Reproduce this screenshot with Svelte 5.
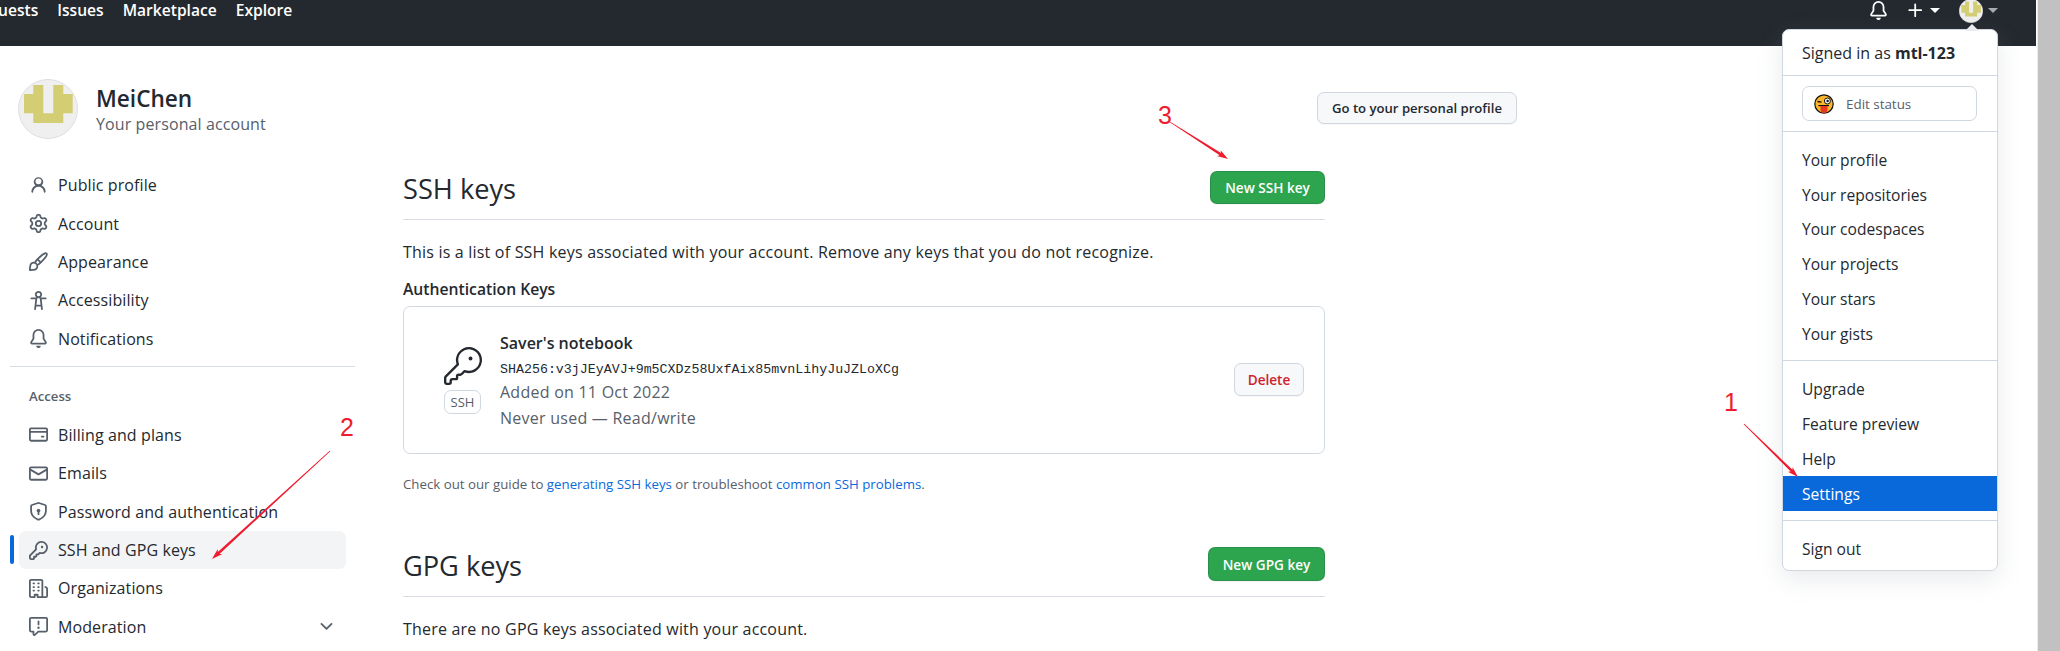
<script lang="ts">
  const icons: Record<string, string> = {
    person: 'M10.561 8.073a6.005 6.005 0 0 1 3.432 5.142.75.75 0 1 1-1.498.07 4.5 4.5 0 0 0-8.99 0 .75.75 0 1 1-1.498-.07 6.004 6.004 0 0 1 3.431-5.142 3.999 3.999 0 1 1 5.123 0ZM10.5 4.5a2.5 2.5 0 1 0-5 0 2.5 2.5 0 0 0 5 0Z',
    gear: 'M8 0a8.2 8.2 0 0 1 .701.031C9.444.095 9.99.645 10.16 1.29l.288 1.107c.018.066.079.158.212.224.231.114.454.243.668.386.123.082.233.09.299.071l1.103-.303c.644-.176 1.392.021 1.82.63.27.385.506.792.704 1.218.315.675.111 1.422-.364 1.891l-.814.806c-.049.048-.098.147-.088.294.016.257.016.515 0 .772-.01.147.038.246.088.294l.814.806c.475.469.679 1.216.364 1.891a7.977 7.977 0 0 1-.704 1.217c-.428.61-1.176.807-1.82.63l-1.102-.302c-.067-.019-.177-.011-.3.071a5.909 5.909 0 0 1-.668.386c-.133.066-.194.158-.211.224l-.29 1.106c-.168.646-.715 1.196-1.458 1.26a8.006 8.006 0 0 1-1.402 0c-.743-.064-1.289-.614-1.458-1.26l-.289-1.106c-.018-.066-.079-.158-.212-.224a5.738 5.738 0 0 1-.668-.386c-.123-.082-.233-.09-.299-.071l-1.103.303c-.644.176-1.392-.021-1.82-.63a8.12 8.12 0 0 1-.704-1.218c-.315-.675-.111-1.422.363-1.891l.815-.806c.05-.048.098-.147.088-.294a6.214 6.214 0 0 1 0-.772c.01-.147-.038-.246-.088-.294l-.815-.806C.635 6.045.431 5.298.746 4.623a7.92 7.92 0 0 1 .704-1.217c.428-.61 1.176-.807 1.82-.63l1.102.302c.067.019.177.011.3-.071.214-.143.437-.272.668-.386.133-.066.194-.158.211-.224l.29-1.106C6.009.645 6.556.095 7.299.03 7.53.01 7.764 0 8 0Zm-.571 1.525c-.036.003-.108.036-.137.146l-.289 1.105c-.147.561-.549.967-.998 1.189-.173.086-.34.183-.5.29-.417.278-.97.423-1.529.27l-1.103-.303c-.109-.03-.175.016-.195.045-.22.312-.412.644-.573.99-.014.031-.021.11.059.19l.815.806c.411.406.562.957.53 1.456a4.709 4.709 0 0 0 0 .582c.032.499-.119 1.05-.53 1.456l-.815.806c-.081.08-.073.159-.059.19.162.346.353.677.573.989.02.03.085.076.195.046l1.102-.303c.56-.153 1.113-.008 1.53.27.161.107.328.204.501.29.447.222.85.629.997 1.189l.289 1.105c.029.109.101.143.137.146a6.6 6.6 0 0 0 1.142 0c.036-.003.108-.036.137-.146l.289-1.105c.147-.561.549-.967.998-1.189.173-.086.34-.183.5-.29.417-.278.97-.423 1.529-.27l1.103.303c.109.029.175-.016.195-.045.22-.313.411-.644.573-.99.014-.031.021-.11-.059-.19l-.815-.806c-.411-.406-.562-.957-.53-1.456a4.709 4.709 0 0 0 0-.582c-.032-.499.119-1.05.53-1.456l.815-.806c.081-.08.073-.159.059-.19a6.464 6.464 0 0 0-.573-.989c-.02-.03-.085-.076-.195-.046l-1.102.303c-.56.153-1.113.008-1.53-.27a4.44 4.44 0 0 0-.501-.29c-.447-.222-.85-.629-.997-1.189l-.289-1.105c-.029-.11-.101-.143-.137-.146a6.6 6.6 0 0 0-1.142 0ZM11 8a3 3 0 1 1-6 0 3 3 0 0 1 6 0ZM9.5 8a1.5 1.5 0 1 0-3.001.001A1.5 1.5 0 0 0 9.5 8Z',
    paintbrush: 'M11.134 1.535c.7-.509 1.416-.942 2.076-1.155.649-.21 1.463-.267 2.069.34.603.601.568 1.411.368 2.07-.202.668-.624 1.39-1.125 2.096-1.011 1.424-2.496 2.987-3.775 4.249-1.098 1.084-2.132 1.839-3.04 2.3a3.744 3.744 0 0 1-1.055 3.217c-.431.431-1.065.691-1.657.861-.614.177-1.294.287-1.914.357A21.151 21.151 0 0 1 .797 16H.743l.007-.75H.749L.742 16a.75.75 0 0 1-.743-.742l.743-.008-.742.007v-.054a21.25 21.25 0 0 1 .13-2.284c.067-.647.187-1.287.358-1.914.17-.591.43-1.226.86-1.657a3.746 3.746 0 0 1 3.227-1.054c.466-.893 1.225-1.907 2.314-2.982 1.271-1.255 2.833-2.75 4.245-3.777ZM1.62 13.089c-.051.464-.086.929-.104 1.395.466-.018.932-.053 1.396-.104a10.511 10.511 0 0 0 1.668-.309c.526-.151.856-.325 1.011-.48a2.25 2.25 0 1 0-3.182-3.182c-.155.155-.329.485-.48 1.01a10.515 10.515 0 0 0-.309 1.67Zm10.396-10.34c-1.224.89-2.605 2.189-3.822 3.384l1.718 1.718c1.21-1.205 2.51-2.597 3.387-3.833.47-.662.78-1.227.912-1.662.134-.444.032-.551.009-.575h-.001V1.78c-.014-.014-.113-.113-.548.027-.432.14-.995.462-1.655.94Zm-4.832 7.266-.001.001a9.859 9.859 0 0 0 1.63-1.142L7.155 7.216a9.7 9.7 0 0 0-1.161 1.607c.482.302.889.71 1.19 1.192Z',
    accessibility: 'M9.923 5.302c.063.063.122.129.178.198H14A.75.75 0 0 1 14 7h-3.3l.578 5.163.362 2.997a.75.75 0 0 1-1.49.18L9.868 13H6.132l-.282 2.34a.75.75 0 0 1-1.49-.18l.362-2.997L5.3 7H2a.75.75 0 0 1 0-1.5h3.9a2.54 2.54 0 0 1 .176-.198 3 3 0 1 1 3.847 0ZM9.2 7.073h-.001a1.206 1.206 0 0 0-2.398 0L6.305 11.5h3.39ZM9.5 3a1.5 1.5 0 1 0-3.001.001A1.5 1.5 0 0 0 9.5 3Z',
    bell: 'M8 16c.9 0 1.7-.6 1.9-1.5.1-.3-.1-.5-.4-.5h-3c-.3 0-.5.2-.4.5.2.9 1 1.5 1.9 1.5ZM3 5a5 5 0 0 1 10 0v2.947c0 .05.015.098.042.139l1.703 2.555A1.519 1.519 0 0 1 13.482 13H2.518a1.516 1.516 0 0 1-1.263-2.36l1.703-2.554A.255.255 0 0 0 3 7.947Zm5-3.5A3.5 3.5 0 0 0 4.5 5v2.947c0 .346-.102.683-.294.97l-1.703 2.556a.017.017 0 0 0-.003.01l.001.006c0 .002.002.004.004.006l.006.004.007.001h10.964l.007-.001.006-.004.004-.006.001-.007a.017.017 0 0 0-.003-.01l-1.703-2.554a1.745 1.745 0 0 1-.294-.97V5A3.5 3.5 0 0 0 8 1.5Z',
    card: 'M10.75 9a.75.75 0 0 0 0 1.5h1.5a.75.75 0 0 0 0-1.5h-1.5ZM0 3.75C0 2.784.784 2 1.75 2h12.5c.966 0 1.75.784 1.75 1.75v8.5A1.75 1.75 0 0 1 14.25 14H1.75A1.75 1.75 0 0 1 0 12.25ZM14.5 6.5h-13v5.75c0 .138.112.25.25.25h12.5a.25.25 0 0 0 .25-.25Zm0-2.75a.25.25 0 0 0-.25-.25H1.75a.25.25 0 0 0-.25.25V5h13Z',
    mail: 'M1.75 2h12.5c.966 0 1.75.784 1.75 1.75v8.5A1.75 1.75 0 0 1 14.25 14H1.75A1.75 1.75 0 0 1 0 12.25v-8.5C0 2.784.784 2 1.75 2ZM1.5 12.251c0 .138.112.25.25.25h12.5a.25.25 0 0 0 .25-.25V5.809L8.38 9.397a.75.75 0 0 1-.76 0L1.5 5.809v6.442Zm13-8.181v-.32a.25.25 0 0 0-.25-.25H1.75a.25.25 0 0 0-.25.25v.32L8 7.88Z',
    shield: 'M7.467.133a1.748 1.748 0 0 1 1.066 0l5.25 1.68A1.75 1.75 0 0 1 15 3.48V7c0 1.566-.32 3.182-1.303 4.682-.983 1.498-2.585 2.813-5.032 3.855a1.697 1.697 0 0 1-1.33 0c-2.447-1.042-4.049-2.357-5.032-3.855C1.32 10.182 1 8.566 1 7V3.48a1.75 1.75 0 0 1 1.217-1.667Zm.61 1.429a.25.25 0 0 0-.153 0l-5.25 1.68a.25.25 0 0 0-.174.238V7c0 1.358.275 2.666 1.057 3.86.784 1.194 2.121 2.34 4.366 3.297a.196.196 0 0 0 .154 0c2.245-.956 3.582-2.104 4.366-3.298C13.225 9.666 13.5 8.36 13.5 7V3.48a.251.251 0 0 0-.174-.237l-5.25-1.68ZM8.75 8.582v1.668a.75.75 0 0 1-1.5 0V8.582a1.5 1.5 0 1 1 1.5 0Z',
    key: 'M10.5 0a5.499 5.499 0 1 1-1.288 10.848l-.932.932a.75.75 0 0 1-.53.22H7v.75a.75.75 0 0 1-.22.53l-.5.5a.75.75 0 0 1-.53.22H5v.75a.75.75 0 0 1-.22.53l-.5.5a.75.75 0 0 1-.53.22h-2A1.75 1.75 0 0 1 0 14.25v-2c0-.199.079-.389.22-.53l4.932-4.932A5.5 5.5 0 0 1 10.5 0Zm-4 5.5c-.001.431.069.86.205 1.269a.75.75 0 0 1-.181.768L1.5 12.56v1.69c0 .138.112.25.25.25h1.69l.06-.06v-1.19a.75.75 0 0 1 .75-.75h1.19l.06-.06v-1.19a.75.75 0 0 1 .75-.75h1.19l1.023-1.025a.75.75 0 0 1 .768-.18A4 4 0 1 0 6.5 5.5ZM11 6a1 1 0 1 1 0-2 1 1 0 0 1 0 2Z',
    org: 'M1.75 16A1.75 1.75 0 0 1 0 14.25V1.75C0 .784.784 0 1.75 0h8.5C11.216 0 12 .784 12 1.75v12.5c0 .085-.006.168-.018.25h2.268a.25.25 0 0 0 .25-.25V8.285a.25.25 0 0 0-.111-.208l-1.055-.703a.749.749 0 1 1 .832-1.248l1.055.703c.487.325.779.871.779 1.456v5.965A1.75 1.75 0 0 1 14.25 16h-3.5a.766.766 0 0 1-.197-.026c-.099.017-.2.026-.303.026h-3a.75.75 0 0 1-.75-.75V14h-1v1.25a.75.75 0 0 1-.75.75Zm-.25-1.75c0 .138.112.25.25.25H4v-1.25a.75.75 0 0 1 .75-.75h2.5a.75.75 0 0 1 .75.75v1.25h2.25a.25.25 0 0 0 .25-.25V1.75a.25.25 0 0 0-.25-.25h-8.5a.25.25 0 0 0-.25.25ZM3.75 6h.5a.75.75 0 0 1 0 1.5h-.5a.75.75 0 0 1 0-1.5ZM3 3.75A.75.75 0 0 1 3.75 3h.5a.75.75 0 0 1 0 1.5h-.5A.75.75 0 0 1 3 3.75Zm4 3A.75.75 0 0 1 7.75 6h.5a.75.75 0 0 1 0 1.5h-.5A.75.75 0 0 1 7 6.75ZM7.75 3h.5a.75.75 0 0 1 0 1.5h-.5a.75.75 0 0 1 0-1.5ZM3 9.75A.75.75 0 0 1 3.75 9h.5a.75.75 0 0 1 0 1.5h-.5A.75.75 0 0 1 3 9.75ZM7.75 9h.5a.75.75 0 0 1 0 1.5h-.5a.75.75 0 0 1 0-1.5Z',
    report: 'M0 1.75C0 .784.784 0 1.75 0h12.5C15.216 0 16 .784 16 1.75v9.5A1.75 1.75 0 0 1 14.25 13H8.06l-2.573 2.573A1.458 1.458 0 0 1 3 14.543V13H1.75A1.75 1.75 0 0 1 0 11.25Zm1.75-.25a.25.25 0 0 0-.25.25v9.5c0 .138.112.25.25.25h2a.75.75 0 0 1 .75.75v2.19l2.72-2.72a.749.749 0 0 1 .53-.22h6.5a.25.25 0 0 0 .25-.25v-9.5a.25.25 0 0 0-.25-.25Zm7 2.25v2.5a.75.75 0 0 1-1.5 0v-2.5a.75.75 0 0 1 1.5 0ZM9 9a1 1 0 1 1-2 0 1 1 0 0 1 2 0Z',
    chevron: 'M12.78 5.22a.749.749 0 0 1 0 1.06l-4.25 4.25a.749.749 0 0 1-1.06 0L3.22 6.28a.749.749 0 1 1 1.06-1.06L8 8.939l3.72-3.719a.749.749 0 0 1 1.06 0Z',
    plus: 'M7.75 2a.75.75 0 0 1 .75.75V7h4.25a.75.75 0 0 1 0 1.5H8.5v4.25a.75.75 0 0 1-1.5 0V8.5H2.75a.75.75 0 0 1 0-1.5H7V2.75A.75.75 0 0 1 7.75 2Z'
  };

  const key24 =
    'M16.75 8.5a1.25 1.25 0 1 0 0-2.5 1.25 1.25 0 0 0 0 2.5ZM15.75 0a8.25 8.25 0 0 0-7.851 10.79L.513 18.178A1.75 1.75 0 0 0 0 19.414v2.836C0 23.217.784 24 1.75 24h1.5A1.75 1.75 0 0 0 5 22.25v-1a.25.25 0 0 1 .25-.25h2.735a.75.75 0 0 0 .545-.22l.214-.213A.875.875 0 0 0 9 19.948V18.5a.25.25 0 0 1 .25-.25h1.086c.464 0 .91-.184 1.237-.513l1.636-1.636A8.25 8.25 0 1 0 15.75 0ZM9 8.25a6.75 6.75 0 1 1 4.288 6.287.75.75 0 0 0-.802.168l-1.976 1.975a.25.25 0 0 1-.177.073H9.25A1.75 1.75 0 0 0 7.5 18.5v1H5.25a1.75 1.75 0 0 0-1.75 1.75v1a.25.25 0 0 1-.25.25h-1.5a.25.25 0 0 1-.25-.25v-2.836a.25.25 0 0 1 .073-.177l7.722-7.721a.75.75 0 0 0 .18-.768A6.73 6.73 0 0 1 9 8.25Z';

  const topLinks = [
    { label: 'Public profile', icon: 'person' },
    { label: 'Account', icon: 'gear' },
    { label: 'Appearance', icon: 'paintbrush' },
    { label: 'Accessibility', icon: 'accessibility' },
    { label: 'Notifications', icon: 'bell' }
  ];

  const accessLinks = [
    { label: 'Billing and plans', icon: 'card' },
    { label: 'Emails', icon: 'mail' },
    { label: 'Password and authentication', icon: 'shield' },
    { label: 'SSH and GPG keys', icon: 'key', current: true },
    { label: 'Organizations', icon: 'org' },
    { label: 'Moderation', icon: 'report', more: true }
  ];

  const profileLinks = ['Your profile', 'Your repositories', 'Your codespaces', 'Your projects', 'Your stars', 'Your gists'];
  const helpLinks = ['Upgrade', 'Feature preview', 'Help'];

  // tail to tip, in page pixels
  const arrows = [
    { x1: 1744, y1: 424, x2: 1798, y2: 477 },
    { x1: 330, y1: 451, x2: 212, y2: 559 },
    { x1: 1170, y1: 122, x2: 1228, y2: 159 }
  ];

  function arrowPoints(a: { x1: number; y1: number; x2: number; y2: number }) {
    const dx = a.x2 - a.x1;
    const dy = a.y2 - a.y1;
    const len = Math.hypot(dx, dy);
    const ux = dx / len;
    const uy = dy / len;
    const at = (along: number, side: number) =>
      `${(a.x2 - ux * along - uy * side).toFixed(1)},${(a.y2 - uy * along + ux * side).toFixed(1)}`;
    return [
      at(len, 0.4),
      at(9, 1.3),
      at(11, 3.4),
      `${a.x2},${a.y2}`,
      at(11, -3.4),
      at(9, -1.3),
      at(len, -0.4)
    ].join(' ');
  }
</script>

{#snippet icon(name: string, cls = 'ico')}
  <svg class={cls} viewBox="0 0 16 16" aria-hidden="true"><path fill-rule="evenodd" d={icons[name]} /></svg>
{/snippet}

{#snippet identicon(cls: string)}
  <svg class={cls} viewBox="0 0 60 60" aria-hidden="true">
    <circle cx="30" cy="30" r="29.5" fill="#efefef" stroke="#dfdfdf" />
    <path fill="#d3cd74" d="M15.3 6h10v28.3h10V6h10v9h9.4v19.3h-9.4V44h-30v-9.7H6V15h9.3Z" />
  </svg>
{/snippet}

{#snippet navLink(link: { label: string; icon: string; current?: boolean; more?: boolean })}
  <a class="side-link" class:current={link.current} href="#top">
    {@render icon(link.icon)}
    <span>{link.label}</span>
    {#if link.more}{@render icon('chevron', 'chev')}{/if}
  </a>
{/snippet}

<div class="page" id="top">
  <div class="content">
    <header class="topbar">
      <nav class="topnav">
        <a href="#top">uests</a>
        <a href="#top">Issues</a>
        <a href="#top">Marketplace</a>
        <a href="#top">Explore</a>
      </nav>
      <div class="tools">
        {@render icon('bell', 'bell')}
        {@render icon('plus', 'plus')}
        <span class="caret"></span>
        {@render identicon('mini')}
        <span class="caret dim"></span>
      </div>
    </header>

    <div class="wrap">
      <div class="page-head">
        <div class="who">
          {@render identicon('big')}
          <div class="who-text">
            <div class="name">MeiChen</div>
            <div class="acct">Your personal account</div>
          </div>
        </div>
        <button class="btn profile-btn">Go to your personal profile</button>
      </div>

      <div class="columns">
        <aside class="sidebar">
          {#each topLinks as link}
            {@render navLink(link)}
          {/each}
          <hr class="side-rule" />
          <div class="side-title">Access</div>
          {#each accessLinks as link}
            {@render navLink(link)}
          {/each}
        </aside>

        <main class="main">
          <div class="sub-head">
            <h2>SSH keys</h2>
            <button class="btn green">New SSH key</button>
          </div>
          <p class="lead">This is a list of SSH keys associated with your account. Remove any keys that you do not recognize.</p>
          <h3>Authentication Keys</h3>
          <div class="key-card">
            <div class="key-side">
              <svg class="key-ico" viewBox="0 0 24 24" aria-hidden="true"><path fill-rule="evenodd" d={key24} /></svg>
              <span class="badge">SSH</span>
            </div>
            <div class="key-info">
              <div class="key-name">Saver's notebook</div>
              <code>SHA256:v3jJEyAVJ+9m5CXDz58UxfAix85mvnLihyJuJZLoXCg</code>
              <div class="key-meta first">Added on 11 Oct 2022</div>
              <div class="key-meta">Never used — Read/write</div>
            </div>
            <button class="btn danger">Delete</button>
          </div>
          <p class="note">Check out our guide to <a href="#top">generating SSH keys</a> or troubleshoot <a href="#top">common SSH problems</a>.</p>

          <div class="sub-head gpg">
            <h2>GPG keys</h2>
            <button class="btn green wide">New GPG key</button>
          </div>
          <p class="lead">There are no GPG keys associated with your account.</p>
        </main>
      </div>
    </div>

    <div class="menu">
      <div class="signed">Signed in as <strong>mtl-123</strong></div>
      <div class="status-row">
        <button class="status">
          <svg class="emoji" viewBox="0 0 20 20" aria-hidden="true">
            <circle cx="10" cy="10" r="9.2" fill="#fbb62b" stroke="#111" stroke-width="1.2" />
            <path d="M3.5 7.5l4 .6" stroke="#111" stroke-width="1.3" fill="none" />
            <circle cx="13.4" cy="7" r="3" fill="#fff" stroke="#111" stroke-width="1" />
            <circle cx="13.6" cy="7" r="1.2" fill="#111" />
            <path d="M4.5 11.6h10.5" stroke="#111" stroke-width="1.2" />
            <path d="M6.5 12h7v3.6a3.3 3.3 0 0 1-7 0Z" fill="#e8391f" />
          </svg>
          <span>Edit status</span>
        </button>
      </div>
      <div class="group">
        {#each profileLinks as item}
          <a class="item" href="#top">{item}</a>
        {/each}
      </div>
      <div class="group">
        {#each helpLinks as item}
          <a class="item" href="#top">{item}</a>
        {/each}
        <a class="item active" href="#top">Settings</a>
      </div>
      <div class="group last">
        <a class="item" href="#top">Sign out</a>
      </div>
    </div>
  </div>
  <div class="gutter"></div>

  <!-- red annotations drawn over the screenshot -->
  <svg class="marks" viewBox="0 0 2060 651" aria-hidden="true">
    {#each arrows as a}
      <polygon points={arrowPoints(a)} fill="#ee1c2e" />
    {/each}
    <text x="1724" y="411">1</text>
    <text x="340" y="436">2</text>
    <text x="1158" y="124">3</text>
  </svg>
</div>

<style>
  :global(body) {
    margin: 0;
    background: #fff;
  }

  .page {
    position: relative;
    display: flex;
    width: 2060px;
    height: 651px;
    overflow: hidden;
    font-family: "Open Sans", "Noto Sans", sans-serif;
    font-size: 16px;
    line-height: 24px;
    color: #24292f;
  }

  .content {
    position: relative;
    width: 2036px;
    flex: none;
  }

  .gutter {
    width: 22px;
    margin-left: 1px;
    border-left: 1px solid #ececec;
    flex: none;
    background: #c1c1c1;
  }

  a {
    text-decoration: none;
    color: inherit;
  }

  .topbar {
    display: flex;
    justify-content: space-between;
    height: 46px;
    padding-right: 38px;
    box-sizing: border-box;
    background: #24292f;
    overflow: hidden;
  }

  .topnav {
    display: flex;
    gap: 19px;
    height: 20px;
    margin-left: -2px;
    align-items: center;
    font-size: 15.6px;
    font-weight: 600;
    color: #fff;
  }

  .tools {
    display: flex;
    align-items: center;
    height: 21px;
  }

  .bell {
    width: 19px;
    height: 19px;
    fill: #fff;
  }

  .plus {
    width: 19px;
    height: 19px;
    margin-left: 18px;
    fill: #fff;
  }

  .caret {
    width: 0;
    height: 0;
    margin-left: 5px;
    border: 5px solid transparent;
    border-top-color: #fff;
    border-bottom: 0;
  }

  .caret.dim {
    border-top-color: #a8abae;
  }

  .mini {
    width: 24px;
    height: 24px;
    margin-left: 19px;
    flex: none;
  }

  .wrap {
    width: 1507px;
    padding: 33px 0 0 10px;
  }

  .page-head {
    display: flex;
    justify-content: space-between;
    align-items: flex-start;
    height: 87px;
    padding-left: 8px;
  }

  .who {
    display: flex;
    align-items: center;
    gap: 18px;
  }

  .who-text {
    padding-top: 2px;
  }

  .big {
    width: 60px;
    height: 60px;
    flex: none;
  }

  .name {
    font-size: 22.6px;
    font-weight: 600;
    line-height: 27px;
  }

  .acct {
    color: #57606a;
    letter-spacing: 0.1px;
  }

  .btn {
    display: inline-flex;
    align-items: center;
    justify-content: center;
    height: 33px;
    box-sizing: border-box;
    padding: 0;
    border: 1px solid #d0d7de;
    border-radius: 7px;
    background: #f6f8fa;
    box-shadow: 0 1px 0 rgba(27, 31, 36, 0.04);
    font-family: inherit;
    font-size: 13.6px;
    font-weight: 600;
    color: #24292f;
  }

  .profile-btn {
    width: 200px;
    height: 32px;
    margin-top: 13px;
    font-size: 13.1px;
  }

  .green {
    width: 115px;
    background: #2da44e;
    border-color: rgba(27, 31, 36, 0.15);
    color: #fff;
  }

  .green.wide {
    width: 117px;
    height: 34px;
  }

  .danger {
    flex: none;
    width: 70px;
    margin-bottom: 2px;
    color: #cf222e;
  }

  .columns {
    display: flex;
    gap: 48px;
    align-items: flex-start;
  }

  .sidebar {
    width: 345px;
    flex: none;
  }

  .side-link {
    position: relative;
    display: flex;
    align-items: center;
    height: 38.4px;
    margin: 0 9px;
    padding-left: 10px;
    border-radius: 7px;
    letter-spacing: 0.1px;
  }

  .side-link.current {
    background: #f3f4f6;
  }

  .side-link.current::before {
    content: '';
    position: absolute;
    left: -9px;
    top: 4px;
    bottom: 5px;
    width: 4px;
    border-radius: 4px;
    background: #0969da;
  }

  .ico {
    width: 19px;
    height: 19px;
    margin-right: 10px;
    flex: none;
    fill: #57606a;
  }

  .chev {
    width: 19px;
    height: 19px;
    margin-left: auto;
    margin-right: 10px;
    fill: #57606a;
  }

  .side-rule {
    height: 1px;
    margin: 7.7px 0 0;
    border: 0;
    background: #d8dee4;
  }

  .side-title {
    height: 49px;
    padding: 17px 0 0 19px;
    box-sizing: border-box;
    font-size: 13.2px;
    font-weight: 600;
    color: #57606a;
  }

  .main {
    width: 922px;
    flex: none;
  }

  .sub-head {
    display: flex;
    justify-content: space-between;
    align-items: center;
    padding: 5px 0 15px;
    border-bottom: 1px solid #d8dee4;
  }

  .sub-head.gpg {
    margin-top: 46px;
  }

  h2 {
    margin: 3px 0 0;
    font-size: 27.2px;
    font-weight: 400;
    line-height: 30px;
  }

  h3 {
    margin: 13px 0 5px;
    font-size: 15.7px;
    font-weight: 600;
    line-height: 24px;
  }

  .lead {
    margin: 20px 0 0;
    letter-spacing: 0.2px;
  }

  .key-card {
    display: flex;
    align-items: center;
    height: 148px;
    box-sizing: border-box;
    padding: 0 20px 0 39px;
    border: 1px solid #d0d7de;
    border-radius: 7px;
  }

  .key-side {
    display: flex;
    flex-direction: column;
    align-items: center;
    gap: 5px;
    width: 39px;
    margin-right: 18px;
    flex: none;
  }

  .key-ico {
    width: 38px;
    height: 38px;
    fill: #24292f;
  }

  .badge {
    width: 37px;
    height: 24px;
    box-sizing: border-box;
    border: 1px solid #d0d7de;
    border-radius: 7px;
    font-size: 13px;
    line-height: 22px;
    text-align: center;
    color: #57606a;
  }

  .key-info {
    flex: 1;
  }

  .key-name {
    font-weight: 600;
  }

  code {
    display: block;
    margin-top: 3px;
    font-family: "Liberation Mono", monospace;
    font-size: 13.3px;
    line-height: 24px;
  }

  .key-meta {
    margin-top: 2px;
    color: #57606a;
    letter-spacing: 0.25px;
  }

  .key-meta.first {
    margin-top: -2px;
  }

  .note {
    margin: 18px 0 0;
    font-size: 13.27px;
    color: #57606a;
  }

  .note a {
    color: #0969da;
  }

  .menu {
    position: absolute;
    left: 1782px;
    top: 29px;
    width: 216px;
    height: 542px;
    box-sizing: border-box;
    border: 1px solid #d0d7de;
    border-radius: 7px;
    background: #fff;
    box-shadow: 0 8px 24px rgba(140, 149, 159, 0.2);
    font-size: 15.6px;
  }

  .menu::before {
    content: '';
    position: absolute;
    left: 182px;
    top: -6px;
    width: 0;
    height: 0;
    border: 7px solid transparent;
    border-top: 0;
    border-bottom-color: #e9ecef;
  }

  .signed {
    padding: 11px 19px 10px;
    border-bottom: 1px solid #d0d7de;
    font-size: 16px;
  }

  .signed strong {
    font-weight: 700;
  }

  .status-row {
    padding: 10px 19px;
    border-bottom: 1px solid #d0d7de;
  }

  .status {
    display: flex;
    align-items: center;
    width: 175px;
    height: 35px;
    box-sizing: border-box;
    padding: 0 0 0 11px;
    border: 1px solid #d0d7de;
    border-radius: 7px;
    background: #fff;
    font-family: inherit;
    font-size: 13.4px;
    color: #57606a;
  }

  .emoji {
    width: 20px;
    height: 20px;
    margin-right: 12px;
    flex: none;
  }

  .group {
    padding: 10.5px 0 9px;
    border-bottom: 1px solid #d0d7de;
  }

  .group.last {
    border-bottom: 0;
  }

  .item {
    display: flex;
    align-items: center;
    height: 34.8px;
    padding-left: 19px;
  }

  .item.active {
    background: #0969da;
    color: #fff;
  }

  .marks {
    position: absolute;
    left: 0;
    top: 0;
    width: 2060px;
    height: 651px;
    pointer-events: none;
    fill: #ee1c2e;
    font-family: "Liberation Sans", sans-serif;
    font-size: 25px;
  }
</style>
